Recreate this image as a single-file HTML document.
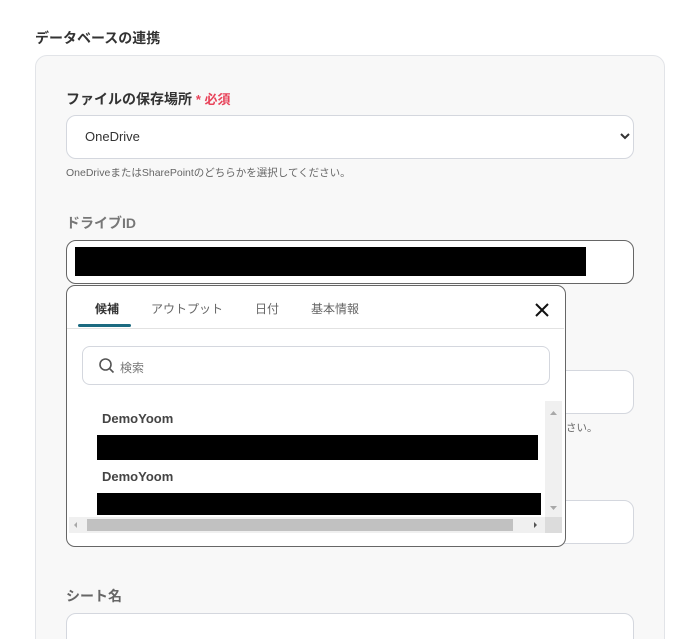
<!DOCTYPE html>
<html style="width:679px;height:639px;overflow:hidden"><head><meta charset="utf-8"><style>
*{box-sizing:border-box;margin:0;padding:0}
body{width:679px;height:639px;background:#fff;position:relative;overflow:hidden;font-family:"Liberation Sans","Noto Sans CJK JP",sans-serif;color:#333}
.a{position:absolute}
.panel{left:35px;top:55px;width:630px;height:600px;background:#f8f8f8;border:1px solid #e2e4e8;border-radius:12px}
.lbl{font-size:14px;font-weight:bold;white-space:nowrap}
.box{background:#fff;border:1px solid #d4d7de;border-radius:10px}
.help{font-size:10.5px;color:#666;white-space:nowrap}
.blk{background:#000}
</style></head><body>
<div class="a lbl" style="left:35px;top:28px;color:#333">データベースの連携</div>
<div class="a panel"></div>
<div class="a lbl" style="left:66px;top:89px;color:#333">ファイルの保存場所 <span style="color:#e8435a;font-size:13px">* 必須</span></div>
<div class="a box" style="left:66px;top:115px;width:568px;height:44px"></div>
<div class="a" style="left:85px;top:129px;font-size:13px;color:#333">OneDrive</div>
<svg class="a" style="left:619px;top:131px" width="12" height="10"><path d="M2 3l4 4 4-4" stroke="#333" stroke-width="2" fill="none"/></svg>
<div class="a help" style="left:66px;top:165px">OneDriveまたはSharePointのどちらかを選択してください。</div>
<div class="a lbl" style="left:66px;top:213px;color:#777">ドライブID</div>
<div class="a" style="left:66px;top:240px;width:568px;height:44px;background:#fff;border:1px solid #666;border-radius:10px"></div>
<div class="a blk" style="left:75px;top:247px;width:511px;height:29px"></div>
<div class="a box" style="left:540px;top:370px;width:94px;height:44px"></div>
<div class="a help" style="left:566px;top:420px">さい。</div>
<div class="a box" style="left:540px;top:500px;width:94px;height:44px"></div>
<div class="a lbl" style="left:66px;top:586px;color:#666">シート名</div>
<div class="a box" style="left:66px;top:613px;width:568px;height:44px"></div>
<div class="a" style="left:66px;top:285px;width:500px;height:262px;background:#fff;border:1px solid #666;border-radius:9px"></div>
<div class="a" style="left:95px;top:300px;font-size:12px;font-weight:bold;color:#333">候補</div>
<div class="a" style="left:151px;top:300px;font-size:12px;color:#666">アウトプット</div>
<div class="a" style="left:255px;top:300px;font-size:12px;color:#666">日付</div>
<div class="a" style="left:311px;top:300px;font-size:12px;color:#666">基本情報</div>
<div class="a" style="left:78px;top:324px;width:53px;height:3px;background:#1b6a80;border-radius:2px"></div>
<div class="a" style="left:67px;top:328px;width:497px;height:1px;background:#e2e2e2"></div>
<svg class="a" style="left:534px;top:302px" width="16" height="16"><path d="M2 2l12 12M14 2L2 14" stroke="#111" stroke-width="2"/></svg>
<div class="a box" style="left:82px;top:346px;width:468px;height:39px;border-radius:8px"></div>
<svg class="a" style="left:98px;top:357px" width="18" height="18"><circle cx="7.5" cy="7.5" r="5.5" stroke="#555" stroke-width="1.6" fill="none"/><path d="M11.5 11.5l4 4" stroke="#555" stroke-width="1.6"/></svg>
<div class="a" style="left:120px;top:359px;font-size:12px;color:#777">検索</div>
<div class="a" style="left:545px;top:401px;width:17px;height:117px;background:#f0f0f0"></div>
<svg class="a" style="left:545px;top:401px" width="17" height="117"><path d="M5 14l3.5-4 3.5 4z" fill="#a8a8a8"/><path d="M5 105l3.5 4 3.5-4z" fill="#a8a8a8"/></svg>
<div class="a" style="left:69px;top:517px;width:476px;height:16px;background:#f0f0f0"></div>
<div class="a" style="left:545px;top:517px;width:17px;height:16px;background:#dcdcdc"></div>
<div class="a" style="left:87px;top:519px;width:426px;height:12px;background:#c1c1c1"></div>
<svg class="a" style="left:69px;top:517px" width="476" height="16"><path d="M8 5l-3 3 3 3z" fill="#a8a8a8"/><path d="M465 5l3 3-3 3z" fill="#555"/></svg>
<div class="a" style="left:102px;top:411px;font-size:13px;font-weight:bold;color:#444">DemoYoom</div>
<div class="a blk" style="left:97px;top:435px;width:441px;height:25px"></div>
<div class="a" style="left:102px;top:469px;font-size:13px;font-weight:bold;color:#444">DemoYoom</div>
<div class="a blk" style="left:97px;top:493px;width:444px;height:22px"></div>
</body></html>
